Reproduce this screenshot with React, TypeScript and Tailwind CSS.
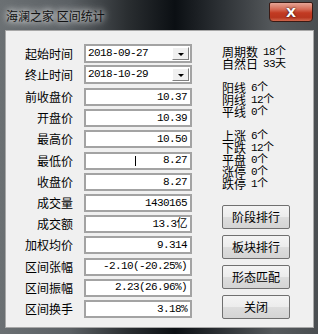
import React from "react";

const cjk = "font-['Noto_Sans_CJK_SC',sans-serif]";
const mono = "font-['Liberation_Mono','Noto_Sans_CJK_SC',monospace] text-[11px] tracking-[-0.6px]";

const rows: [string, string][] = [
  ["前收盘价", "10.37"],
  ["开盘价", "10.39"],
  ["最高价", "10.50"],
  ["最低价", "8.27"],
  ["收盘价", "8.27"],
  ["成交量", "1430165"],
  ["成交额", "13.3亿"],
  ["加权均价", "9.314"],
  ["区间张幅", "-2.10(-20.25%)"],
  ["区间振幅", "2.23(26.96%)"],
  ["区间换手", "3.18%"],
];

const stats: ([string, string] | null)[] = [
  ["周期数", "18个"],
  ["自然日", "33天"],
  null,
  ["阳线", "6个"],
  ["阴线", "12个"],
  ["平线", "0个"],
  null,
  ["上涨", "6个"],
  ["下跌", "12个"],
  ["平盘", "0个"],
  ["涨停", "0个"],
  ["跌停", "1个"],
];

const buttons = ["阶段排行", "板块排行", "形态匹配", "关闭"];

function Combo({ label, value }: { label: string; value: string }) {
  return (
    <div className="flex items-center h-[19px]">
      <div className={`w-[67px] text-right text-[12px] leading-none text-black ${cjk}`}>{label}</div>
      <div className="ml-[11px] w-[108px] h-[19px] border-2 border-[#a3a3a3] bg-white flex items-center">
        <span className={`pl-[2px] flex-1 text-black ${mono}`}>{value}</span>
        <div className="mr-[1px] w-[17px] h-[13px] bg-[#f0f0f0] border border-t-white border-l-white border-r-[#808080] border-b-[#808080] flex items-center justify-center">
          <div className="mt-[2px] w-0 h-0 border-l-[3px] border-r-[3px] border-t-[3px] border-l-transparent border-r-transparent border-t-black" />
        </div>
      </div>
    </div>
  );
}

function Field({ label, value, caret }: { label: string; value: string; caret?: boolean }) {
  return (
    <div className="flex items-center h-[18px]">
      <div className={`w-[67px] text-right text-[12px] leading-none text-black ${cjk}`}>{label}</div>
      <div className="relative ml-[11px] w-[108px] h-[18px] border-2 border-[#a3a3a3] bg-white flex items-center justify-end pr-[3px]">
        {caret && <div className="absolute left-[49px] top-[2px] w-[1px] h-[10px] bg-black" />}
        <span className={`text-black ${mono}`}>{value}</span>
      </div>
    </div>
  );
}

export default function App() {
  return (
    <div className="w-[318px] h-[334px] overflow-hidden flex flex-col bg-[linear-gradient(90deg,#6b7073_0%,#5b6064_22%,#2a2e31_40%,#0b0f13_55%,#2e3236_70%,#55595c_86%,#4a4e51_100%)]">
      <div className="h-[30px] flex items-start relative">
        <span className={`ml-[6px] mt-[9px] text-[12px] leading-[14px] text-[#111] [text-shadow:0_0_6px_#fff,0_0_10px_rgba(255,255,255,0.8)] ${cjk}`}>
          海澜之家 区间统计
        </span>
        <div className="absolute left-[269px] top-[2px] w-[44px] h-[20px] rounded-b-[4px] rounded-t-[2px] border border-[#3a1a14] bg-[linear-gradient(180deg,#e6a596_0%,#d56a55_35%,#c23a22_55%,#b8361f_80%,#d0664c_100%)] flex items-center justify-center">
          <span className="text-white text-[13px] font-bold leading-none font-['DejaVu_Sans',sans-serif] [text-shadow:0_0_2px_#000]">X</span>
        </div>
      </div>
      <div className="ml-[5px] mr-[4px] h-[298px] border border-[#a8a8a8] bg-[#f0f0f0] flex">
        <div className="pt-[13px] flex flex-col">
          <div className="flex flex-col gap-[2px]">
            <Combo label="起始时间" value="2018-09-27" />
            <Combo label="终止时间" value="2018-10-29" />
          </div>
          <div className="mt-[4px] flex flex-col gap-[3.2px]">
            {rows.map(([l, v]) => (
              <Field key={l} label={l} value={v} caret={l === "最低价"} />
            ))}
          </div>
        </div>
        <div className="ml-[30px] pt-[15px] flex flex-col">
          <div className="flex flex-col">
            {stats.map((s, i) =>
              s ? (
                <div key={i} className="h-[12px] flex items-center">
                  <span className={`text-[12px] leading-[12px] text-black ${cjk}`}>{s[0]}</span>
                  <span className={`ml-[5px] leading-[12px] text-black ${mono}`}>{s[1]}</span>
                </div>
              ) : (
                <div key={i} className="h-[12px]" />
              )
            )}
          </div>
          <div className="mt-[15px] flex flex-col gap-[6px]">
            {buttons.map((b) => (
              <div
                key={b}
                className={`w-[68px] h-[24px] border border-[#707070] rounded-[2px] bg-[linear-gradient(180deg,#f4f4f4_0%,#ececec_50%,#dddddd_51%,#d4d4d4_100%)] flex items-center justify-center text-[12px] text-black ${cjk}`}
              >
                {b}
              </div>
            ))}
          </div>
        </div>
      </div>
    </div>
  );
}
